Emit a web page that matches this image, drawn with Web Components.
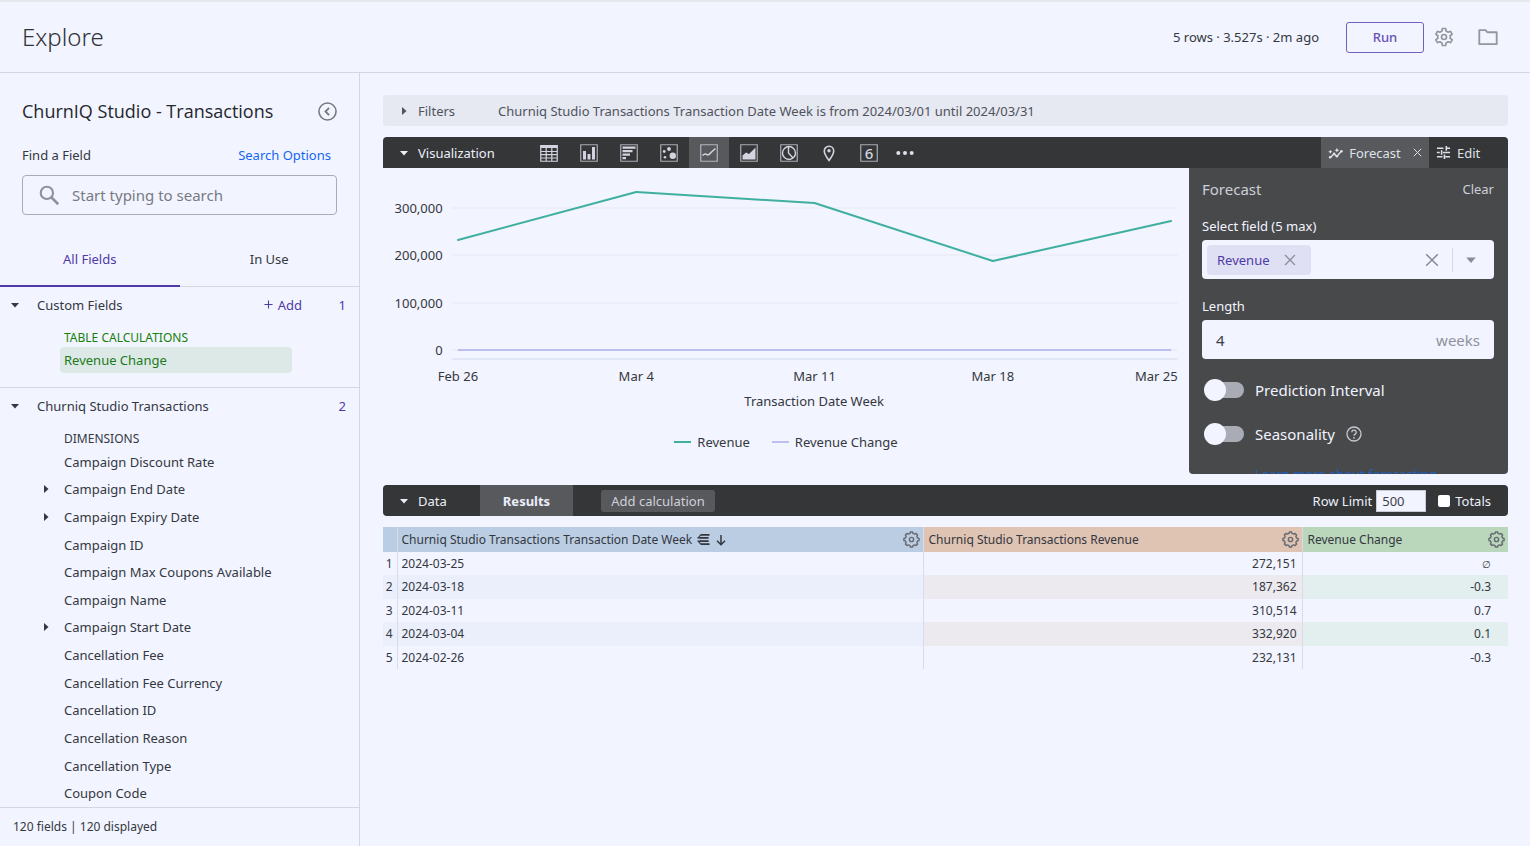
<!DOCTYPE html>
<html lang="en">
<head>
<meta charset="utf-8">
<title>Explore - ChurnIQ Studio</title>
<style>
  html, body { margin: 0; }
  body {
    --bg: #f2f4ff;
    --line: #d3d6e4;
    --purple: #4f3aa6;
    --bar: #343637;
    --bar-active: #58595d;
    --ink: #343840;
    background: var(--bg);
    color: var(--ink);
    font: 13px/20px "Noto Sans", "Open Sans", sans-serif;
  }
</style>
</head>
<body>
<explore-app></explore-app>

<script>
const BASE = `
  *, *::before, *::after { box-sizing: border-box; }
  button { font: inherit; color: inherit; background: none; border: 0; padding: 0; margin: 0; cursor: pointer; }
  input { font: inherit; color: inherit; margin: 0; }
  a { text-decoration: none; }
`;

function define(name, css, html, setup) {
  const template = document.createElement('template');
  template.innerHTML = `<style>${BASE}${css}</style>${html}`;
  customElements.define(name, class extends HTMLElement {
    connectedCallback() {
      if (this.shadowRoot) return;
      this.attachShadow({ mode: 'open' }).append(template.content.cloneNode(true));
      if (setup) setup.call(this, this.shadowRoot);
    }
  });
}

const FRAME = '<path d="M.75.75h16.500v16.500H.75z" fill="none" stroke="currentColor" stroke-width="1.200" opacity=".75"/>';
const GEAR = (teeth, outer, inner) => {
  let d = '';
  for (let i = 0; i < teeth; i++) {
    const a = (i / teeth) * Math.PI * 2 - Math.PI / 2, s = Math.PI / teeth;
    [[-.62, inner], [-.36, outer], [.36, outer], [.62, inner]].forEach(([k, r]) => {
      d += (d ? 'L' : 'M') + (12 + r * Math.cos(a + k * s)).toFixed(2) + ' ' + (12 + r * Math.sin(a + k * s)).toFixed(2);
    });
  }
  return `<path d="${d}Z" fill="none" stroke="currentColor" stroke-width="2" stroke-linejoin="round"/><circle cx="12" cy="12" r="3" fill="none" stroke="currentColor" stroke-width="2"/>`;
};

const ICONS = {
  'caret-down': [10, '<path d="M1 3h8L5 7.500z" fill="currentColor"/>'],
  'caret-right': [10, '<path d="M3 1v8l4.500-4z" fill="currentColor"/>'],
  gear: [24, GEAR(6, 10.4, 7.6)],
  cog: [24, GEAR(8, 10.8, 8.8)],
  folder: [24, '<path d="M2.500 4.500h6.800l2 2.300h10.200v13H2.500z" fill="none" stroke="currentColor" stroke-width="2" stroke-linejoin="round"/>'],
  collapse: [24, '<circle cx="12" cy="12" r="10.800" fill="none" stroke="currentColor" stroke-width="2"/><path d="M14 7.500L9.500 12l4.500 4.500" fill="none" stroke="currentColor" stroke-width="2.400"/>'],
  search: [24, '<circle cx="9" cy="9" r="7" fill="none" stroke="currentColor" stroke-width="2.400"/><path d="M14 14l8 8" stroke="currentColor" stroke-width="3"/>'],
  plus: [10, '<path d="M5 .5v9M.5 5h9" stroke="currentColor" stroke-width="1.200"/>'],
  close: [12, '<path d="M1 1l10 10M11 1L1 11" stroke="currentColor" stroke-width="1.300"/>'],
  table: [18, '<path d="M.5 1h17v3H.5z" fill="currentColor"/><path d="M.75 1v16.250h16.500V1M.5 7.500h17M.5 10.700h17M.5 14h17M6.200 4v13M11.800 4v13" fill="none" stroke="currentColor" stroke-width="1.200"/>'],
  column: [18, FRAME + '<path d="M3 7h3v8.500H3zM7.500 10h3v5.500h-3zM12 3h3v12.500h-3z" fill="currentColor"/>'],
  bar: [18, FRAME + '<path d="M2.500 2.500h13v2.300h-13zM2.500 6h10v2.300h-10zM2.500 9.500h7.500v2.300H2.500zM2.500 13H6v2.300H2.500z" fill="currentColor"/>'],
  scatter: [18, FRAME + '<g fill="currentColor"><circle cx="9" cy="5" r="1.900"/><circle cx="4.200" cy="7.500" r="1.400"/><circle cx="5" cy="13.200" r="1.300"/><circle cx="12.800" cy="11.800" r="3.200"/></g>'],
  line: [18, FRAME + '<path d="M2.500 11.500c2-2 3-2.300 4.500-.8 1.500 1 2.500-.2 4-2.200l4.500-4" fill="none" stroke="currentColor" stroke-width="1.500"/>'],
  area: [18, FRAME + '<path d="M2.500 15.500v-4L6 8.500l3 1.500 6.500-6.500v12z" fill="currentColor"/>'],
  pie: [18, FRAME + '<circle cx="9" cy="9" r="6.500" fill="none" stroke="currentColor" stroke-width="1.400"/><path d="M8.500 2.500V9l4.500 5" fill="none" stroke="currentColor" stroke-width="1.400"/>'],
  pin: [18, '<path d="M9 16.500C6 12.500 4.300 9.700 4.300 7a4.700 4.700 0 0 1 9.400 0c0 2.700-1.700 5.500-4.700 9.500z" fill="none" stroke="currentColor" stroke-width="1.600"/><circle cx="9" cy="6.800" r="1.700" fill="currentColor"/>'],
  frame: [18, FRAME],
  more: [18, '<g fill="currentColor"><circle cx="2.300" cy="9" r="2"/><circle cx="9" cy="9" r="2"/><circle cx="15.700" cy="9" r="2"/></g>'],
  forecast: [16, '<path d="M2.500 13L6.500 9.500l3 2.500L14.500 6.500" fill="none" stroke="currentColor" stroke-width="1.500"/><g fill="currentColor"><circle cx="2.300" cy="13" r="1.400"/><circle cx="6.500" cy="9.500" r="1.400"/><circle cx="9.500" cy="12" r="1.400"/><circle cx="14.300" cy="6.600" r="1.400"/><path d="M2.500 5l.7 1.500 1.500.7-1.500.7-.7 1.500-.7-1.500-1.500-.7 1.500-.7zM9.500 3l.8 1.700 1.700.8-1.700.8-.8 1.700-.8-1.700L7 5.500l1.700-.8z"/></g>'],
  sliders: [16, '<path d="M1 3.500h7M11 3.500h4M11 1v5M1 8h3M7.500 8H15M6 5.500v5M1 12.500h6M10 12.500h5M9 10v5" fill="none" stroke="currentColor" stroke-width="1.700"/>'],
  help: [16, '<circle cx="8" cy="8" r="7" fill="none" stroke="currentColor" stroke-width="1.300"/><path d="M5.800 6.300a2.200 2.200 0 1 1 3.400 1.800c-.8.500-1.200.9-1.200 1.700" fill="none" stroke="currentColor" stroke-width="1.300"/><circle cx="8" cy="11.800" r=".9" fill="currentColor"/>'],
  pivot: [14, '<path d="M4 2h9.500M4 12h9.500M3 5.300h9.500M3 8.700h9.500" stroke="currentColor" stroke-width="1.800"/><path d="M4.500 2C2.500 2 3 5.300.5 5.300H4M4.500 12c-2 0-1.500-3.300-4-3.300H4" fill="none" stroke="currentColor" stroke-width="1.300"/>'],
  down: [12, '<path d="M6 1v9.500M2 6.800l4 4 4-4" fill="none" stroke="currentColor" stroke-width="1.500"/>'],
};

customElements.define('ui-icon', class extends HTMLElement {
  connectedCallback() {
    if (this.shadowRoot) return;
    const [box, body] = ICONS[this.getAttribute('name')];
    const size = this.getAttribute('size') || box;
    this.attachShadow({ mode: 'open' }).innerHTML =
      `<style>:host{display:inline-flex;flex:none}svg{display:block}</style>
       <svg width="${size}" height="${size}" viewBox="0 0 ${box} ${box}" aria-hidden="true">${body}</svg>`;
  }
});

define('explore-header', `
  :host { display: block; border-top: 2px solid #e7e8ee; border-bottom: 1px solid var(--line); }
  header { display: flex; align-items: center; height: 70px; padding: 0 31px 0 22px; }
  h1 { margin: 0; flex: 1; font-size: 24px; line-height: 32px; font-weight: 300; color: #2f3238; }
  .run { width: 78px; height: 31px; margin: 0 10px 0 27px; border: 1px solid #7360bd; border-radius: 3px; color: #6650b5; font-weight: 500; }
  .tool { display: flex; color: #94969b; margin-right: 23px; }
  .tool:last-child { margin-right: 0; }
`, `
  <header>
    <h1>Explore</h1>
    <span>5 rows · 3.527s · 2m ago</span>
    <button class="run">Run</button>
    <button class="tool" aria-label="Settings"><ui-icon name="gear" size="20"></ui-icon></button>
    <button class="tool" aria-label="Folder"><ui-icon name="folder" size="22"></ui-icon></button>
  </header>
`);

define('field-group', `
  :host { display: block; }
  .head { display: flex; align-items: center; height: 35px; padding: 0 13px 0 10px; }
  .name { flex: 1; display: flex; align-items: center; gap: 17px; text-align: left; }
  .count { width: 44px; text-align: right; color: var(--purple); }
  .kind { margin: 6px 0 0 64px; font-size: 12px; line-height: 19px; color: var(--kind, inherit); }
`, `
  <div class="head"><button class="name"><ui-icon name="caret-down"></ui-icon><span class="label"></span></button><slot name="action"></slot><span class="count"></span></div>
  <div class="kind"></div>
  <slot></slot>
`, function (root) {
  root.querySelector('.label').textContent = this.getAttribute('label');
  root.querySelector('.count').textContent = this.getAttribute('count');
  root.querySelector('.kind').textContent = this.getAttribute('kind');
});

define('field-row', `
  :host { display: flex; align-items: center; padding-left: 41px; }
  button { display: flex; align-items: center; gap: 13px; }
  .mark { width: 10px; display: flex; }
`, `<button><span class="mark"></span><span><slot></slot></span></button>`, function (root) {
  if (this.hasAttribute('group')) root.querySelector('.mark').innerHTML = '<ui-icon name="caret-right"></ui-icon>';
});

define('field-sidebar', `
  :host { display: flex; flex-direction: column; border-right: 1px solid var(--line); }
  .top { padding: 26px 22px 18px; }
  .title { display: flex; align-items: center; justify-content: space-between; height: 24px; }
  h2 { margin: 0; font-family: "Open Sans", "Noto Sans", sans-serif; font-size: 18px; line-height: 24px; font-weight: 400; color: #24272d; }
  .title button { display: flex; color: #777a80; }
  .find { display: flex; justify-content: space-between; margin: 20px 6px 8px 0; line-height: 24px; }
  .find a { color: #1268f3; }
  .search { display: flex; align-items: center; gap: 12px; height: 40px; padding: 0 16px; border: 1px solid #a9acb8; border-radius: 4px; color: #8f9298; }
  .search input { flex: 1; min-width: 0; padding: 0; border: 0; background: none; outline: 0; font-size: 15px; }
  .search input::placeholder { color: #777a82; opacity: 1; }
  .tabs { display: grid; grid-template-columns: 1fr 1fr; height: 54px; border-bottom: 1px solid var(--line); }
  .tabs button { height: 54px; border-bottom: 2px solid transparent; }
  .tabs .on { color: var(--purple); border-color: var(--purple); }
  .custom { padding-bottom: 14px; border-bottom: 1px solid var(--line); --kind: #16800a; }
  .add { display: flex; align-items: center; gap: 5px; color: var(--purple); }
  .pill { display: block; width: 232px; margin-left: 60px; padding-left: 4px; height: 26px; border-radius: 4px; background: #dde9e6; color: #1c7a1c; text-align: left; }
  .fields { flex: 1; display: flex; flex-direction: column; min-height: 0; }
  .fields field-row { flex: 1; }
  footer { padding: 9px 13px; border-top: 1px solid var(--line); font-size: 12px; }
`, `
  <div class="top">
    <div class="title"><h2>ChurnIQ Studio - Transactions</h2><button aria-label="Collapse"><ui-icon name="collapse" size="19"></ui-icon></button></div>
    <div class="find"><label for="q">Find a Field</label><a href="#options">Search Options</a></div>
    <div class="search"><ui-icon name="search" size="21"></ui-icon><input id="q" type="text" placeholder="Start typing to search"></div>
  </div>
  <div class="tabs" role="tablist"><button class="on" role="tab" aria-selected="true">All Fields</button><button role="tab" aria-selected="false">In Use</button></div>
  <field-group class="custom" label="Custom Fields" count="1" kind="TABLE CALCULATIONS">
    <button class="add" slot="action"><ui-icon name="plus" size="9"></ui-icon>Add</button>
    <button class="pill">Revenue Change</button>
  </field-group>
  <field-group label="Churniq Studio Transactions" count="2" kind="DIMENSIONS"></field-group>
  <div class="fields">
    <field-row>Campaign Discount Rate</field-row>
    <field-row group>Campaign End Date</field-row>
    <field-row group>Campaign Expiry Date</field-row>
    <field-row>Campaign ID</field-row>
    <field-row>Campaign Max Coupons Available</field-row>
    <field-row>Campaign Name</field-row>
    <field-row group>Campaign Start Date</field-row>
    <field-row>Cancellation Fee</field-row>
    <field-row>Cancellation Fee Currency</field-row>
    <field-row>Cancellation ID</field-row>
    <field-row>Cancellation Reason</field-row>
    <field-row>Cancellation Type</field-row>
    <field-row>Coupon Code</field-row>
  </div>
  <footer>120 fields | 120 displayed</footer>
`);

define('filters-bar', `
  :host { display: flex; align-items: center; height: 31px; padding-left: 16px; background: #e6e8f2; border-radius: 4px; color: #50535b; }
  button { display: flex; align-items: center; gap: 9px; width: 99px; }
`, `<button><ui-icon name="caret-right"></ui-icon>Filters</button><span>Churniq Studio Transactions Transaction Date Week is from 2024/03/01 until 2024/03/31</span>`);

define('viz-bar', `
  :host { display: flex; height: 31px; background: var(--bar); border-radius: 4px 4px 0 0; color: #dfe1ea; }
  button { display: flex; align-items: center; justify-content: center; }
  .toggle { width: 146px; padding-left: 16px; gap: 9px; justify-content: flex-start; color: #eceefa; }
  .type { width: 40px; color: #d2d4e0; position: relative; }
  .type.on { background: var(--bar-active); }
  .digit { position: absolute; font-size: 15px; font-weight: 500; }
  .more { width: 32px; }
  .gap { flex: 1; }
  .forecast { width: 108px; gap: 6px; background: var(--bar-active); }
  .forecast span { margin-right: 6px; }
  .edit { width: 79px; padding-left: 7px; gap: 6px; justify-content: flex-start; }
`, `
  <button class="toggle"><ui-icon name="caret-down"></ui-icon>Visualization</button>
  <button class="type" aria-label="Table"><ui-icon name="table"></ui-icon></button>
  <button class="type" aria-label="Column"><ui-icon name="column"></ui-icon></button>
  <button class="type" aria-label="Bar"><ui-icon name="bar"></ui-icon></button>
  <button class="type" aria-label="Scatterplot"><ui-icon name="scatter"></ui-icon></button>
  <button class="type on" aria-label="Line"><ui-icon name="line"></ui-icon></button>
  <button class="type" aria-label="Area"><ui-icon name="area"></ui-icon></button>
  <button class="type" aria-label="Pie"><ui-icon name="pie"></ui-icon></button>
  <button class="type" aria-label="Map"><ui-icon name="pin"></ui-icon></button>
  <button class="type" aria-label="Single value"><ui-icon name="frame"></ui-icon><span class="digit">6</span></button>
  <button class="more" aria-label="More"><ui-icon name="more"></ui-icon></button>
  <span class="gap"></span>
  <button class="forecast"><ui-icon name="forecast" size="15"></ui-icon><span>Forecast</span><ui-icon name="close" size="9"></ui-icon></button>
  <button class="edit"><ui-icon name="sliders" size="15"></ui-icon>Edit</button>
`);

define('line-chart', `
  :host { display: block; }
  svg { display: block; width: 100%; height: 250px; }
  text { fill: #34373d; font-size: 13px; }
  .legend { display: flex; justify-content: center; gap: 22px; padding: 14px 0 0 0; line-height: 20px; }
  .legend span { display: flex; align-items: center; gap: 6px; }
  .legend i { width: 17px; height: 2px; background: var(--c); }
`, `
  <svg role="img" aria-label="Revenue and Revenue Change by week"></svg>
  <div class="legend"><span style="--c:#3fb0a0"><i></i>Revenue</span><span style="--c:#bdbef0"><i></i>Revenue Change</span></div>
`, function (root) {
  const weeks = [['Feb 26', 232131], ['Mar 4', 332920], ['Mar 11', 310514], ['Mar 18', 187362], ['Mar 25', 272151]];
  const zero = 182, x = i => (9.3 + i * 22.12).toFixed(2) + '%', y = v => Math.round(zero - v * 0.000475);
  let s = '';
  [300000, 200000, 100000, 0].forEach(v => {
    s += `<line x1="8.5%" x2="98.6%" y1="${y(v)}" y2="${y(v)}" stroke="#e6e8f1"/>
          <text x="7.4%" y="${y(v) + 5}" text-anchor="end">${v.toLocaleString('en-US')}</text>`;
  });
  s += `<line x1="8.5%" x2="98.6%" y1="191" y2="191" stroke="#d3dbf0"/>`;
  s += `<line x1="${x(0)}" x2="${x(4)}" y1="${zero}" y2="${zero}" stroke="#bdbef0" stroke-width="2"/>`;
  weeks.forEach(([name, value], i) => {
    const last = i === weeks.length - 1;
    s += `<text x="${last ? '98.6%' : x(i)}" y="213" text-anchor="${last ? 'end' : 'middle'}">${name}</text>`;
    if (!last) s += `<line x1="${x(i)}" y1="${y(value)}" x2="${x(i + 1)}" y2="${y(weeks[i + 1][1])}" stroke="#3fb0a0" stroke-width="2" stroke-linecap="round"/>`;
  });
  s += `<text x="53.5%" y="238" text-anchor="middle">Transaction Date Week</text>`;
  root.querySelector('svg').innerHTML = s;
});

define('forecast-panel', `
  :host { display: block; overflow: hidden; height: 306px; padding: 0 14px 0 13px; background: #48494b; border-radius: 0 0 4px 4px; color: #f2f4ff; }
  .head { display: flex; justify-content: space-between; align-items: center; height: 42px; color: #cdcfd9; }
  h3 { margin: 0; font-size: 15px; font-weight: 400; }
  label.cap { display: block; padding: 6px 0 4px; line-height: 20px; font-size: 13px; }
  .box { display: flex; align-items: center; height: 39px; border-radius: 4px; background: var(--bg); color: #3d4047; margin-bottom: 11px; }
  .box input { flex: 1; min-width: 0; width: 0; padding: 0; border: 0; background: none; outline: 0; font-size: 15px; }
  .chip { display: flex; align-items: center; gap: 14px; height: 30px; margin-left: 5px; padding: 0 15px 0 10px; border-radius: 4px; background: #e0e0f5; color: var(--purple); }
  .chip button, .box button { display: flex; color: #8b8d96; }
  .box .arrow { margin-left: 13px; padding: 6px 17px 6px 12px; border-left: 1px solid #d6d8e3; }
  .length { padding: 0 14px; margin-bottom: 9px; font-size: 15px; }
  .length span { color: #8f929b; }
  .switch { display: flex; align-items: center; height: 44px; font-size: 15px; }
  .switch input { appearance: none; width: 40px; height: 22px; margin: 0 11px 0 2px; display: grid; align-items: center; }
  .switch input::before { content: ""; grid-area: 1/1; height: 16px; margin-left: 4px; border-radius: 8px; background: #a9abb5; }
  .switch input::after { content: ""; grid-area: 1/1; width: 22px; height: 22px; border-radius: 50%; background: var(--bg); }
  .switch ui-icon { margin-left: 11px; color: #c6c8d2; }
  .learn { display: block; padding: 8px 0 0 53px; color: #1c5fc4; white-space: nowrap; }
`, `
  <div class="head"><h3>Forecast</h3><button>Clear</button></div>
  <label class="cap" for="field">Select field (5 max)</label>
  <div class="box">
    <span class="chip">Revenue<button aria-label="Remove Revenue"><ui-icon name="close"></ui-icon></button></span>
    <input id="field" type="text" role="combobox" aria-expanded="false">
    <button aria-label="Clear fields"><ui-icon name="close" size="14"></ui-icon></button>
    <button class="arrow" aria-label="Open list"><ui-icon name="caret-down" size="12"></ui-icon></button>
  </div>
  <label class="cap" for="length">Length</label>
  <div class="box length"><input id="length" type="text" value="4"><span>weeks</span></div>
  <div class="switch"><input id="pi" type="checkbox" role="switch"><label for="pi">Prediction Interval</label></div>
  <div class="switch"><input id="se" type="checkbox" role="switch"><label for="se">Seasonality</label><ui-icon name="help"></ui-icon></div>
  <a class="learn" href="#learn">Learn more about forecasting</a>
`);

define('data-bar', `
  :host { display: flex; align-items: center; height: 31px; padding-right: 17px; background: var(--bar); border-radius: 4px; color: #eceefa; }
  .toggle { display: flex; align-items: center; gap: 9px; width: 97px; padding-left: 16px; }
  .tab { width: 93px; height: 31px; background: var(--bar-active); font-weight: 700; }
  .calc { width: 114px; height: 22px; margin-left: 28px; border-radius: 3px; background: var(--bar-active); color: #cfd1db; }
  .limit { margin-left: auto; margin-right: 4px; }
  .num { width: 50px; height: 22px; padding: 0 5px; border: 1px solid #c9cbd6; background: var(--bg); color: #3d4047; }
  .check { appearance: none; width: 12px; height: 12px; margin: 0 5px 0 12px; border-radius: 2px; background: #fff; }
`, `
  <button class="toggle"><ui-icon name="caret-down"></ui-icon>Data</button>
  <button class="tab">Results</button>
  <button class="calc">Add calculation</button>
  <label class="limit" for="rows">Row Limit</label><input class="num" id="rows" type="text" value="500">
  <input class="check" id="totals" type="checkbox"><label for="totals">Totals</label>
`);

define('results-table', `
  :host { display: block; }
  table { width: 100%; border-collapse: collapse; table-layout: fixed; font-size: 12px; line-height: 16px; }
  th, td { height: 23px; padding: 0 5px; text-align: right; font-weight: 400; border-right: 1px solid #d9dbe8; }
  tr > :last-child { border-right: 0; }
  thead th { height: 25px; text-align: left; }
  .h { display: flex; align-items: center; gap: 5px; color: #33373f; }
  .h button { display: flex; margin-left: auto; margin-right: -2px; color: #666a72; }
  .n, tbody th { padding: 0 4px 0 0; }
  .n, .d { background: #bbcde3; } .m { background: #dfc3b3; } .c { background: #bad6bb; }
  td:nth-child(2), .d { text-align: left; padding-left: 4px; }
  td:last-child { padding-right: 17px; }
  td small { font-size: 10px; }
  tbody tr:nth-child(even) > * { height: 24px; background: #ebeffc; }
  tbody tr:nth-child(even) > :nth-child(3) { background: #ece9ef; }
  tbody tr:nth-child(even) > :nth-child(4) { background: #e3efee; }
`, `
  <table>
    <colgroup><col style="width:14px"><col><col style="width:379px"><col style="width:206px"></colgroup>
    <thead><tr>
      <th class="n"></th>
      <th class="d"><div class="h"><span>Churniq Studio Transactions Transaction Date Week</span><ui-icon name="pivot" size="13"></ui-icon><ui-icon name="down"></ui-icon><button aria-label="Column options"><ui-icon name="cog" size="17"></ui-icon></button></div></th>
      <th class="m"><div class="h"><span>Churniq Studio Transactions Revenue</span><button aria-label="Column options"><ui-icon name="cog" size="17"></ui-icon></button></div></th>
      <th class="c"><div class="h"><span>Revenue Change</span><button aria-label="Column options"><ui-icon name="cog" size="17"></ui-icon></button></div></th>
    </tr></thead>
    <tbody></tbody>
  </table>
`, function (root) {
  root.querySelector('tbody').innerHTML = [
    ['2024-03-25', '272,151', '<small>∅</small>'], ['2024-03-18', '187,362', '-0.3'], ['2024-03-11', '310,514', '0.7'],
    ['2024-03-04', '332,920', '0.1'], ['2024-02-26', '232,131', '-0.3'],
  ].map((r, i) => `<tr><th scope="row">${i + 1}</th>${r.map(c => `<td>${c}</td>`).join('')}</tr>`).join('');
});

define('explore-app', `
  :host { display: grid; grid-template-columns: 360px minmax(0, 1fr); grid-template-rows: auto 1fr; min-height: 100vh; }
  explore-header { grid-column: 1 / -1; }
  main { padding: 22px 22px 0 23px; }
  .view { display: grid; grid-template-columns: minmax(0, 1fr) 319px; height: 317px; }
  viz-bar, results-table { margin-top: 11px; }
`, `
  <explore-header></explore-header>
  <field-sidebar></field-sidebar>
  <main>
    <filters-bar></filters-bar>
    <viz-bar></viz-bar>
    <div class="view"><line-chart></line-chart><forecast-panel></forecast-panel></div>
    <data-bar></data-bar>
    <results-table></results-table>
  </main>
`);
</script>
</body>
</html>
